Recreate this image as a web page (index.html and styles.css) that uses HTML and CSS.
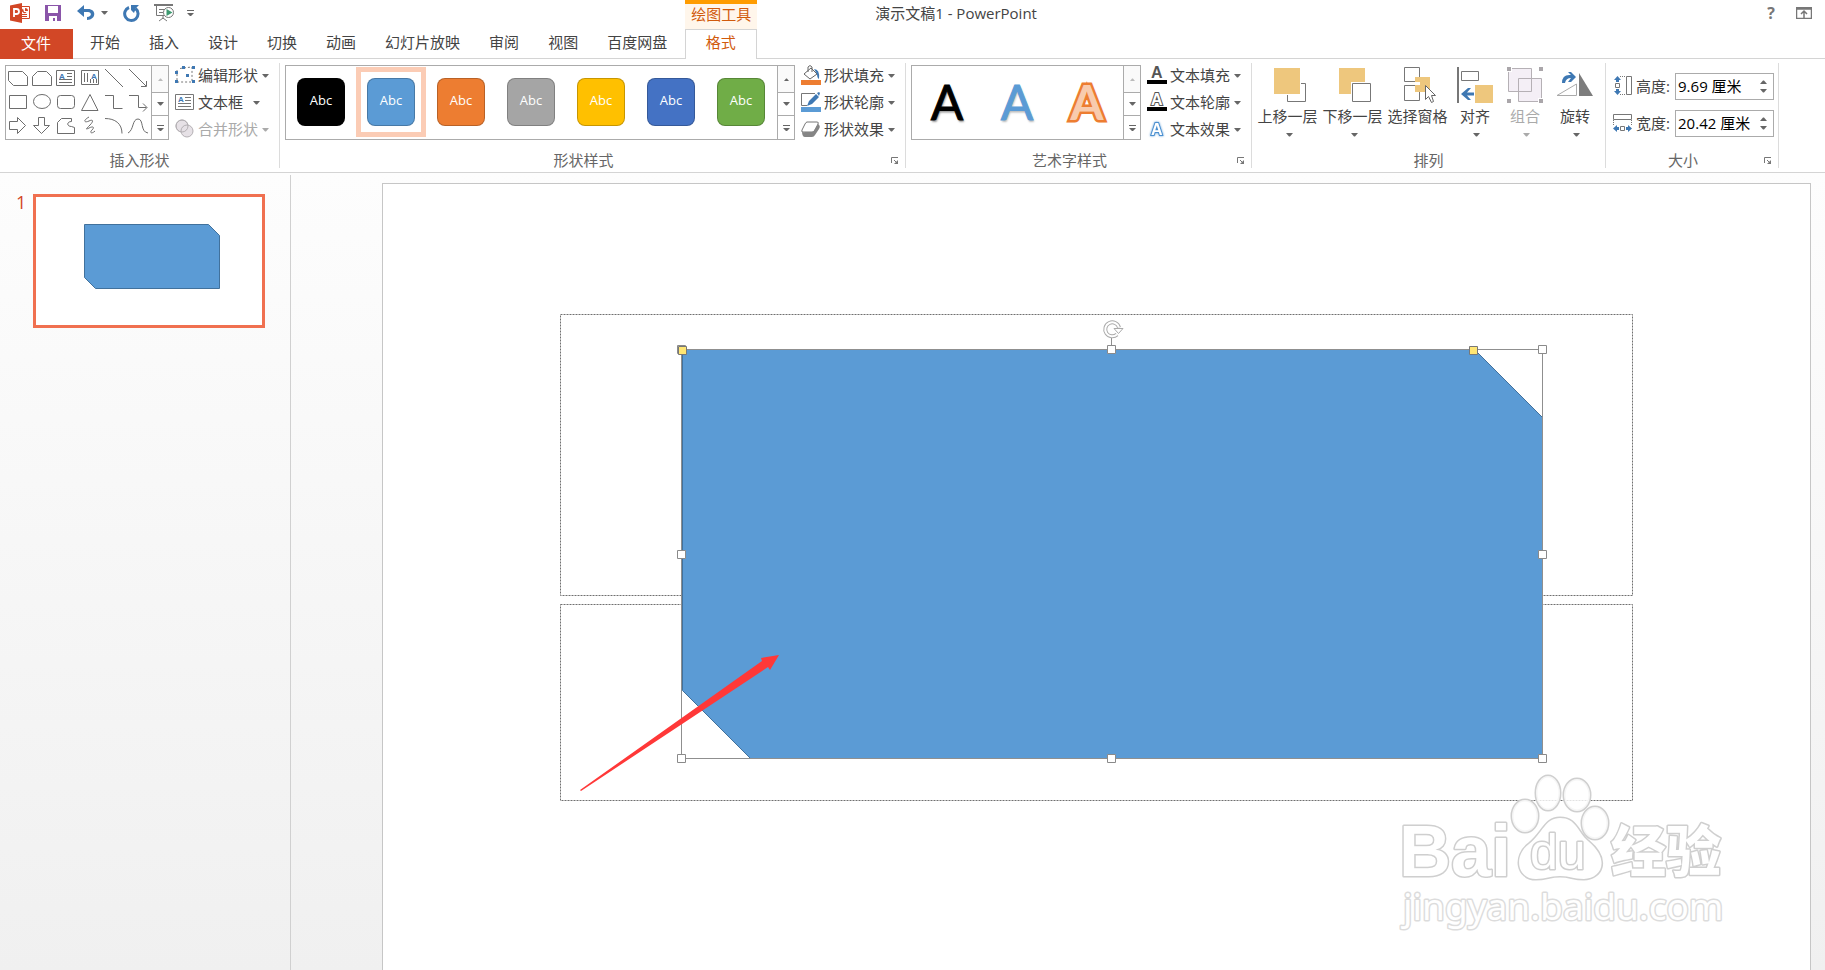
FILE: index.html
```html
<!DOCTYPE html>
<html lang="zh-CN">
<head>
<meta charset="utf-8">
<title>演示文稿1 - PowerPoint</title>
<link rel="stylesheet" href="styles.css">
</head>
<body>
<svg class="defs" aria-hidden="true">
  <symbol id="caret" viewBox="0 0 7 4"><path d="M0 0h7L4 3.500H3z" fill="currentColor"/></symbol>
  <symbol id="caret-up" viewBox="0 0 7 4"><path d="M0 4h7L4 .5H3z" fill="currentColor"/></symbol>
  <symbol id="caret-more" viewBox="0 0 7 6"><path d="M0 0h7v1H0zM0 3h7L4 6H3z" fill="currentColor"/></symbol>
  <symbol id="launch" viewBox="0 0 8 8"><path d="M.5 6V.5H7M3 3l3 3" fill="none" stroke="currentColor"/><path d="M7 3v4H3z" fill="currentColor"/></symbol>
</svg>

<header class="top">
  <div class="quick">
    <svg class="app-logo" viewBox="0 0 21 20" width="21" height="20"><path d="M11 3.500h8.500v12H11" fill="#fff" stroke="#d24726"/><path d="M13 5.500a2.500 2.500 0 1 0 3.500 3.500H14zM15 5v3h3a3 3 0 0 0-3-3zM12 11h5v1h-5zM12 13h5v1h-5z" fill="#d24726"/><path d="M0 2.500 12 0v20L0 17.500z" fill="#d24726"/><path d="M4 14V6h2.500a2.200 2.200 0 0 1 0 5H4" fill="none" stroke="#fff" stroke-width="1.800"/></svg>
    <button class="plain save" aria-label="保存"><svg viewBox="0 0 16 16" width="16" height="16"><path d="M0 0h16v16H0z" fill="#8a55a9"/><path d="M3 1h10v7H3zM4 11h8v5h-2v-3H8v3H4z" fill="#fff"/></svg></button>
    <button class="plain undo" aria-label="撤销"><svg viewBox="0 0 18 16" width="18" height="16"><path d="M0 6 7 0v4h4c9 0 8 11-1 11v-3c5 0 5-5 1-5H7v5z" fill="#3e78b3"/></svg><svg class="caret" width="7" height="4"><use href="#caret"/></svg></button>
    <button class="plain redo" aria-label="重复"><svg viewBox="0 0 17 17" width="17" height="17"><path d="M6 2.500A6.700 6.700 0 1 0 12.500 3.500" fill="none" stroke="#3e78b3" stroke-width="3"/><path d="M8 0h8l-3 3-2 5-3-3z" fill="#3e78b3"/></svg></button>
    <button class="plain show" aria-label="从头开始"><svg viewBox="0 0 20 18" width="20" height="18"><path d="M0 0h19v2H0z" fill="#777"/><path d="M2.500 2v9.500H10M5 5.500h6M5 8.500h4M9 12v3M5 17l4-3 4 3" fill="none" stroke="#777"/><circle cx="14.500" cy="8.500" r="5" fill="#fff" stroke="#777"/><path d="m12.500 5 6 3.500-6 3.500z" fill="#3d9970"/></svg></button>
    <button class="plain" aria-label="自定义快速访问工具栏"><svg class="caret" width="7" height="6"><use href="#caret-more"/></svg></button>
  </div>
  <div class="context">绘图工具</div>
  <div class="caption">
    <span class="doc">演示文稿1 - PowerPoint</span>
    <button class="plain help" aria-label="帮助">?</button>
    <button class="plain" aria-label="功能区显示选项"><svg viewBox="0 0 16 12" width="16" height="12"><path d="M.5.5h15v11H.5zM0 2h16M8 11V4M5 7l3-3 3 3" fill="none" stroke="#777" stroke-width="1.500"/></svg></button>
  </div>
  <nav class="tabs">
    <button class="tab file">文件</button>
    <button class="tab">开始</button><button class="tab">插入</button><button class="tab">设计</button><button class="tab">切换</button><button class="tab">动画</button><button class="tab">幻灯片放映</button><button class="tab">审阅</button><button class="tab">视图</button><button class="tab">百度网盘</button>
  </nav>
  <button class="tab active">格式</button>
  <div class="tab-rest"></div>
</header>

<section class="ribbon">
  <div class="group">
    <div class="group-body">
      <div class="gallery">
        <svg class="shapes" viewBox="6 66 144 73" width="144" height="73" fill="none" stroke="#6d6d6d">
          <path d="M8.500 71.500h14l5 5v9h-14l-5-5zM32.500 85.500v-9l5-5h9l5 5v9zM56.500 70.500h18v15h-18zM67 73.500h5M67 76.500h5M59 79.500h13M59 82.500h13M81.500 70.500h17v14h-17zM84.500 73v9M87.500 73v9M90.500 79v4M93.500 79v4M96.500 79v4M105 69l18 18M129 69l17 17M141 86.500h5.500V81"/>
          <path d="M9.500 95.500h17v13h-17zM90 94.500l8 16H81.500zM105 95.500h8.500v13h9M129 95.500h9.500v12h8M143 103.500l4 4-4 4"/><ellipse cx="42" cy="101.500" rx="8.500" ry="7"/><rect x="57.500" y="95.500" width="17" height="13" rx="3"/>
          <path d="M9.500 121.500h8v-4l8 8-8 8v-4h-8zM38.500 117.500h6v8h5l-8 8-8-8h5zM57.500 133.500v-11l4-4h10v3c-5 0-5 5 0 5l3 1v6zM89 117c-7 4-4 6 0 4s5 0 1 4-5 5-1 3 6-1 3 2 0 4 3 1M105 118.500c10 0 17 5 17 15M128 133c6-3 4-14 10-14s2 13 10 14"/>
          <g fill="#3e78b3" stroke="none" class="mini"><text x="59" y="79">A</text><text x="91" y="79">A</text></g>
        </svg>
        <div class="scroll"><button class="off" aria-label="上一行"><svg width="5" height="3" viewBox="0 0 7 4"><use href="#caret-up" width="7" height="4"/></svg></button><button aria-label="下一行"><svg width="7" height="4"><use href="#caret"/></svg></button><button aria-label="其他形状"><svg width="7" height="6"><use href="#caret-more"/></svg></button></div>
      </div>
      <div class="menu">
        <button><svg viewBox="0 0 20 20" width="20" height="20"><path d="M5 3.500 8 3l9-1v15H2V5" fill="none" stroke="#777" stroke-dasharray="2 2"/><path d="M0 15h3v3H0zM17 15h3v3h-3zM17 1h3v3h-3zM7 1h3v3H7zM0 6h3v3H0zM11 9h3v3h-3z" fill="#3e78b3"/></svg><span>编辑形状</span><svg class="caret" width="7" height="4"><use href="#caret"/></svg></button>
        <button class="wide-gap"><svg viewBox="0 0 20 20" width="20" height="20"><path d="M.5 2.500h18v15H.5zM10 5.500h6M10 8.500h6M3 11.500h13M3 14.500h13" fill="none" stroke="#777"/><text class="mini" x="3" y="10" fill="#3e78b3">A</text></svg><span>文本框</span><svg class="caret" width="7" height="4"><use href="#caret"/></svg></button>
        <button disabled><svg viewBox="0 0 20 20" width="20" height="20"><g fill="#e6e1e6" stroke="#b4b0b4"><circle cx="7" cy="7" r="6"/><circle cx="12" cy="12" r="6"/><circle cx="7" cy="7" r="6" fill="none"/></g></svg><span>合并形状</span><svg class="caret" width="7" height="4"><use href="#caret"/></svg></button>
      </div>
    </div>
    <div class="group-foot"><span>插入形状</span></div>
  </div>

  <div class="group">
    <div class="group-body">
      <div class="gallery">
        <button class="cell"><span class="swatch black">Abc</span></button><button class="cell chosen"><span class="swatch blue">Abc</span></button><button class="cell"><span class="swatch orange">Abc</span></button><button class="cell"><span class="swatch gray">Abc</span></button><button class="cell"><span class="swatch gold">Abc</span></button><button class="cell"><span class="swatch navy">Abc</span></button><button class="cell"><span class="swatch green">Abc</span></button>
        <div class="scroll"><button class="first" aria-label="上一行"><svg width="5" height="3" viewBox="0 0 7 4"><use href="#caret-up" width="7" height="4"/></svg></button><button aria-label="下一行"><svg width="7" height="4"><use href="#caret"/></svg></button><button aria-label="其他样式"><svg width="7" height="6"><use href="#caret-more"/></svg></button></div>
      </div>
      <div class="menu">
        <button><svg viewBox="0 0 20 20" width="20" height="20"><path d="M0 15h20v5H0z" fill="#ed7d31"/><path d="m3 9 7-6 6 6-7 5zM7 7V2q2-3 4 0v5" fill="#fff" stroke="#666"/><path d="M13 4q6 0 5 10-2-1-2-5z" fill="#3e78b3"/></svg><span>形状填充</span><svg class="caret" width="7" height="4"><use href="#caret"/></svg></button>
        <button><svg viewBox="0 0 20 20" width="20" height="20"><path d="M0 15h20v5H0z" fill="#5b9bd5"/><path d="M14 1.500H.5v12H6" fill="none" stroke="#777"/><path d="m6 14 2-5 7-7 3 3-7 7zM16 1l2-1 1 1-1 3z" fill="#3e78b3"/></svg><span>形状轮廓</span><svg class="caret" width="7" height="4"><use href="#caret"/></svg></button>
        <button><svg viewBox="0 0 20 20" width="20" height="20"><path d="M6 3h10q2 0 1 2l-3 6q-1 2-3 2H2q-2 0-1-2l3-6q1-2 2-2z" fill="#fff" stroke="#777"/><path d="M1 12q1 2 3 1h8l5-8q3 2 1 5l-4 6q-1 2-3 2H4q-3 0-3-6z" fill="#858585"/></svg><span>形状效果</span><svg class="caret" width="7" height="4"><use href="#caret"/></svg></button>
      </div>
    </div>
    <div class="group-foot"><span>形状样式</span><button class="plain launcher" aria-label="设置形状格式"><svg width="8" height="8"><use href="#launch"/></svg></button></div>
  </div>

  <div class="group">
    <div class="group-body">
      <div class="gallery">
        <button class="cell art art-black">A</button><button class="cell art art-blue">A</button><button class="cell art art-orange">A</button>
        <div class="scroll"><button class="off" aria-label="上一行"><svg width="5" height="3" viewBox="0 0 7 4"><use href="#caret-up" width="7" height="4"/></svg></button><button aria-label="下一行"><svg width="7" height="4"><use href="#caret"/></svg></button><button aria-label="其他艺术字"><svg width="7" height="6"><use href="#caret-more"/></svg></button></div>
      </div>
      <div class="menu">
        <button><svg viewBox="0 0 20 20" width="20" height="20"><path d="M0 15h20v4H0z"/><text class="letter" x="4" y="13" fill="#555">A</text></svg><span>文本填充</span><svg class="caret" width="7" height="4"><use href="#caret"/></svg></button>
        <button><svg viewBox="0 0 20 20" width="20" height="20"><path d="M0 15h20v4H0z"/><text class="letter outline" x="4" y="13" fill="#fff" stroke="#555">A</text></svg><span>文本轮廓</span><svg class="caret" width="7" height="4"><use href="#caret"/></svg></button>
        <button><svg viewBox="0 0 20 20" width="20" height="20"><text class="letter outline glow" x="4" y="16" fill="#fff" stroke="#4a8fd0">A</text></svg><span>文本效果</span><svg class="caret" width="7" height="4"><use href="#caret"/></svg></button>
      </div>
    </div>
    <div class="group-foot"><span>艺术字样式</span><button class="plain launcher" aria-label="设置文本效果格式"><svg width="8" height="8"><use href="#launch"/></svg></button></div>
  </div>

  <div class="group arrange">
    <div class="group-body">
      <button class="big wide"><svg viewBox="0 0 36 38" width="36" height="38"><path d="M17.500 16.500h18v18h-18z" fill="#fff" stroke="#777"/><path d="M3 0h28v28H3z" fill="#fff"/><path d="M4 1h26v26H4z" fill="#eec77d"/></svg><span>上移一层</span><svg class="caret" width="7" height="4"><use href="#caret"/></svg></button>
      <button class="big wide"><svg viewBox="0 0 36 38" width="36" height="38"><path d="M4 1h26v26H4z" fill="#eec77d"/><path d="M16 15h20v21H16z" fill="#fff"/><path d="M17.500 16.500h18v18h-18z" fill="#fff" stroke="#777"/></svg><span>下移一层</span><svg class="caret" width="7" height="4"><use href="#caret"/></svg></button>
      <button class="big wide"><svg viewBox="0 0 36 38" width="36" height="38"><path d="M4.500.5h15v14h-15zM4.500 18.500h15v15h-15z" fill="#fff" stroke="#777"/><path d="M15 10h15v15H15z" fill="#eec77d"/><path d="M15 15h5v3h-5z" fill="#fff"/><path d="M25.500 18.500v14l3-3 3 6 2-1-2-6h4z" fill="#fff" stroke="#666"/></svg><span>选择窗格</span></button>
      <button class="big"><svg viewBox="0 0 36 38" width="36" height="38"><path d="M1 0v36" stroke="#777" stroke-width="2"/><path d="M4.500 4.500h17v9h-17z" fill="#fff" stroke="#777"/><path d="M18 18h18v18H18z" fill="#eec77d"/><path d="m4 27 7-6h3l-4 4.500h7v3h-7l4 4.500h-3z" fill="#3e78b3"/></svg><span>对齐</span><svg class="caret" width="7" height="4"><use href="#caret"/></svg></button>
      <button class="big" disabled><svg viewBox="0 0 36 38" width="36" height="38"><path d="M1.500 1.500h23v23h-23z" fill="#f4eff6" stroke="#b5b0b5"/><path d="M11.500 11.500h23v23h-23z" fill="#f4eff6" stroke="#b5b0b5"/><path d="M11 24.500h13.500V11" fill="none" stroke="#b5b0b5"/><path d="M0 0h4v4H0zM32 0h4v4h-4zM0 32h4v4H0zM32 32h4v4h-4z" fill="#aaa6aa" stroke="#fff" stroke-width="2" paint-order="stroke"/></svg><span>组合</span><svg class="caret" width="7" height="4"><use href="#caret"/></svg></button>
      <button class="big"><svg viewBox="0 0 38 38" width="38" height="38"><path d="M1 28.500 20.500 17v11.500z" fill="#fff" stroke="#aaa"/><path d="M23 6v23h14z" fill="#7d7d7d"/><path d="M6 16q0-9 9-8l-3-3h3l5 5-5 5h-3l3-4q-5 0-6 5z" fill="#3e78b3"/></svg><span>旋转</span><svg class="caret" width="7" height="4"><use href="#caret"/></svg></button>
    </div>
    <div class="group-foot"><span>排列</span></div>
  </div>

  <div class="group size">
    <div class="group-body">
      <div class="field"><svg viewBox="0 0 20 20" width="20" height="20"><path d="M13.500 .5h5v18h-5z" fill="#fff" stroke="#777"/><path d="M7 .5h6M7 18.500h6" stroke="#777" stroke-dasharray="1 1"/><path d="M2.500 7.500h4v4h-4z" fill="none" stroke="#777"/><path d="m4.500 0 3.500 4H6v2H3V4H1zM4.500 19 8 15H6v-2H3v2H1z" fill="#3e78b3"/></svg><label for="h">高度:</label><div class="spin"><input id="h" type="text" value="9.69 厘米"><div class="steps"><button aria-label="增加高度"><svg width="7" height="4"><use href="#caret-up"/></svg></button><button aria-label="减少高度"><svg width="7" height="4"><use href="#caret"/></svg></button></div></div></div>
      <div class="field"><svg viewBox="0 0 20 20" width="20" height="20"><path d="M.5 1.500h18v5H.5z" fill="#fff" stroke="#777"/><path d="M.5 7v6M18.500 7v6" stroke="#777" stroke-dasharray="1 1"/><path d="M7.500 13.500h4v4h-4z" fill="none" stroke="#777"/><path d="m0 15.500 4-3.500v2h2v3H4v2zM19 15.500 15 12v2h-2v3h2v2z" fill="#3e78b3"/></svg><label for="w">宽度:</label><div class="spin"><input id="w" type="text" value="20.42 厘米"><div class="steps"><button aria-label="增加宽度"><svg width="7" height="4"><use href="#caret-up"/></svg></button><button aria-label="减少宽度"><svg width="7" height="4"><use href="#caret"/></svg></button></div></div></div>
    </div>
    <div class="group-foot"><span>大小</span><button class="plain launcher" aria-label="大小和位置"><svg width="8" height="8"><use href="#launch"/></svg></button></div>
  </div>
</section>

<main class="work">
  <aside class="pane">
    <span class="num">1</span>
    <button class="thumb" aria-label="幻灯片 1"><svg viewBox="36 197 226 128" width="226" height="128"><path d="M84.500 224.500h124l11 11v53h-124l-11-11z" fill="#5b9bd5" stroke="#41719c"/></svg></button>
  </aside>
  <div class="stage">
    <div class="slide">
      <svg class="canvas" viewBox="383 184 1428 786" width="1428" height="786">
        <g fill="none" stroke="#707070" stroke-dasharray="2 1"><path d="M560.500 314.500h1072v281h-1072zM560.500 604.500h1072v196h-1072z"/></g>
        <path d="M682.500 349.500h792l68 68v341h-792l-68-68z" fill="#5b9bd5" stroke="#41719c"/>
        <path d="M681.500 349.500h861v409h-861zM1111.500 349v-13" fill="none" stroke="#8f8f8f"/>
        <path d="M1117 334.500a7 7 0 1 1 2-7" fill="none" stroke="#aaa" stroke-width="4"/><path d="M1117 334.500a7 7 0 1 1 2-7" fill="none" stroke="#fff" stroke-width="2"/><path d="M1114 328.500h9l-4.500 5z" fill="#fff" stroke="#aaa"/>
        <g fill="#fff" stroke="#8a8a8a"><path d="M677.500 345.500h8v8h-8zM1107.500 345.500h8v8h-8zM1538.500 345.500h8v8h-8zM677.500 550.500h8v8h-8zM1538.500 550.500h8v8h-8zM677.500 754.500h8v8h-8zM1107.500 754.500h8v8h-8zM1538.500 754.500h8v8h-8z"/></g>
        <path d="M678.500 346.500h8v8h-8zM1469.500 346.500h8v8h-8z" fill="#ffe673" stroke="#777"/>
        <path d="m580 790 182-129-1-3 18-3-9 15-2-3-187 124z" fill="#ff3838"/>
        <g class="mark" fill="#fff" stroke="#cfcfcf" stroke-width="3">
          <g fill-opacity=".8"><ellipse cx="1525" cy="816" rx="13" ry="16"/><ellipse cx="1548" cy="793" rx="12" ry="17"/><ellipse cx="1577" cy="795" rx="13" ry="16"/><ellipse cx="1595" cy="823" rx="13" ry="16"/></g>
          <path d="M1560 818c16 0 17 13 28 23 24 20 12 38-4 38-12 0-13-3-24-3s-13 3-24 3c-19 0-23-23-7-35 14-11 16-26 31-26z"/>
          <text class="mark-name" x="1399" y="876">Bai</text><text class="mark-du" x="1530" y="869">du</text><text class="mark-cjk" x="1611" y="871">经验</text><text class="mark-url" stroke="#dcdcdc" x="1403" y="920">jingyan.baidu.com</text>
        </g>
      </svg>
    </div>
  </div>
</main>
</body>
</html>
```

FILE: styles.css
```css
* { box-sizing: border-box; }
body {
  margin: 0;
  height: 100vh;
  overflow: hidden;
  display: flex;
  flex-direction: column;
  background: #fff;
  color: #444;
  font: 15px/20px "Open Sans", "Noto Sans CJK SC", sans-serif;
}
button, input { font: inherit; color: inherit; }
button { display: flex; align-items: center; padding: 0; border: 0; background: none; white-space: nowrap; }
svg { display: block; flex: none; }
.defs { position: absolute; width: 0; height: 0; }
.caret { color: #666; }

/* title bar and tabs */
.top { display: grid; grid-template-columns: auto 72px 1fr; grid-template-rows: 29px 30px; }
.quick { display: flex; align-items: center; padding: 0 0 3px 10px; }
.save { margin-left: 14px; }
.undo { margin-left: 16px; gap: 6px; }
.redo { margin-left: 15px; }
.show { margin-left: 14px; }
.show + button { margin-left: 13px; }
.context { border-top: 4px solid #ff9c00; background: #fff6eb; color: #d15a0c; text-align: center; line-height: 20px; }
.caption { display: flex; align-items: center; padding: 0 13px 3px 118px; }
.doc { flex: 1; }
.help { margin-right: 21px; font-size: 16px; font-weight: 700; color: #777; }
.tabs { display: flex; padding-right: 4px; border-bottom: 1px solid #d4d4d4; }
.tab { padding: 0 14px 4px 15px; }
.file { margin: 0 2px -1px 0; padding: 0 22px 2px 21px; background: #d24726; color: #fff; }
.active { justify-content: center; padding: 0 1px 5px 0; border: 1px solid #d4d4d4; border-bottom: 0; color: #d15a0c; }
.tab-rest { border-bottom: 1px solid #d4d4d4; }

/* ribbon */
.ribbon { display: flex; height: 114px; padding: 4px 0; border-bottom: 1px solid #d4d4d4; }
.group { display: flex; flex-direction: column; padding: 0 10px 0 5px; border-right: 1px solid #dcdcdc; }
.group-body { display: flex; flex: 1; gap: 6px; }
.group-foot { display: flex; align-items: center; height: 16px; margin-right: -10px; margin-left: -5px; color: #666; text-align: center; }
.group-foot span { flex: 1; }
.launcher { width: 18px; height: 8px; margin-top: 2px; padding-left: 4px; color: #777; }
.gallery { display: flex; height: 75px; margin-top: 2px; border: 1px solid #ababab; }
.scroll { display: grid; grid-template-rows: 26px 23px 24px; width: 17px; margin-left: 1px; border-left: 1px solid #ababab; color: #666; }
.scroll button { justify-content: center; border-top: 1px solid #ababab; }
.scroll button:first-child { border-top: 0; background: #fafafa; }
.scroll .off { color: #bbb; }
.cell { width: 70px; height: 70px; margin-top: 1px; padding: 0; justify-content: center; border: 5px solid transparent; }
.chosen { border-color: #fbccb5; }
.swatch { width: 48px; height: 48px; border: 1px solid rgb(0 0 0 / 22%); border-radius: 8px; color: #fff; font-size: 13px; line-height: 42px; text-align: center; }
.black { background: #000; }
.blue { background: #5b9bd5; }
.orange { background: #ed7d31; }
.gray { background: #a5a5a5; }
.gold { background: #ffc000; }
.navy { background: #4472c4; }
.green { background: #70ad47; }
.art { font: 48px/60px Lato, sans-serif; }
.art-black { color: #000; -webkit-text-stroke: 1px #000; text-shadow: 1px 2px 2px #999; }
.art-blue { color: #5b9bd5; -webkit-text-stroke: 1px #5b9bd5; text-shadow: 1px 2px 2px #bbb; }
.art-orange { color: #f8cbad; font-weight: 700; -webkit-text-stroke: 5px #ed7d31; paint-order: stroke; }
.menu { margin-top: -2px; }
.menu button { gap: 3px; height: 27px; }
.menu .caret { margin: 2px 0 0 1px; }
.menu .wide-gap .caret { margin-left: 7px; }
button:disabled, button:disabled .caret { color: #aaa; }
.mini { font: bold 8px "Liberation Sans", sans-serif; }
.letter { font: bold 16px "Liberation Sans", sans-serif; }
.outline { paint-order: stroke; stroke-width: 2px; }
.glow { filter: drop-shadow(0 0 1px #5b9bd5); }
.arrange { padding: 0 5px 0 3px; }
.arrange .group-body { gap: 0; }
.arrange .group-foot { margin: 0 -5px 0 -3px; }
.big { flex-direction: column; width: 50px; padding-top: 4px; }
.wide { width: 65px; }
.big span { margin: 1px 0 7px; }
.big .caret { margin-left: 3px; }
.size { padding: 0 4px 0 7px; }
.size .group-body { flex-direction: column; gap: 10px; padding-top: 10px; }
.size .group-foot { margin: 0 -4px 0 -7px; }
.field { display: flex; align-items: center; gap: 3px; }
.field svg { margin-bottom: 2px; }
.field label { width: 36px; padding-bottom: 2px; }
.spin { display: flex; width: 99px; height: 27px; border: 1px solid #ababab; color: #000; }
.spin input { flex: 1; min-width: 0; padding: 0 0 1px 2px; border: 0; background: none; }
.steps { display: flex; flex-direction: column; justify-content: center; gap: 5px; width: 19px; padding-left: 6px; color: #666; }
.steps svg { margin: 0; }

/* work area */
.work { display: flex; flex: 1; min-height: 0; padding-top: 2px; background: linear-gradient(#fdfdfd, #f0f0f0); }
.pane { display: flex; align-items: flex-start; gap: 8px; width: 291px; padding: 19px 0 0 16px; border-right: 1px solid #d0d0d0; }
.num { width: 9px; color: #d24726; font-size: 18px; line-height: 16px; }
.thumb { border: 3px solid #f07050; background: #fff; }
.stage { flex: 1; min-width: 0; padding: 8px 14px 0 91px; }
.slide { height: 100%; overflow: hidden; border: 1px solid #c6c6c6; border-bottom: 0; background: #fff; }
.canvas { margin: 0 auto; }
.mark { paint-order: stroke; stroke-linejoin: round; }
.mark-name { font: bold 72px "Liberation Sans", sans-serif; }
.mark-du { font: 50px "Liberation Sans", sans-serif; }
.mark-cjk { font: 900 55px "Noto Sans CJK SC", sans-serif; }
.mark-url { font: 37px "Noto Sans", sans-serif; }
```
